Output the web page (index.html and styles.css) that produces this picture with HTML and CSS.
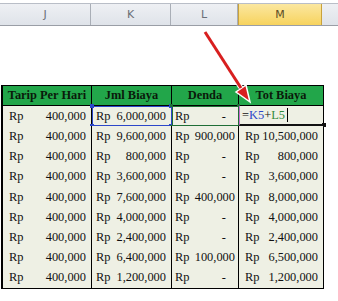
FILE: index.html
```html
<!DOCTYPE html>
<html>
<head>
<meta charset="utf-8">
<link rel="stylesheet" href="styles.css">
</head>
<body>
<div class="sheet">
  <div class="colhead">
    <div class="ch c-j">J</div>
    <div class="ch c-k">K</div>
    <div class="ch c-l">L</div>
    <div class="ch c-m active">M</div>
    <div class="ch c-n"></div>
  </div>
  <div class="blank"></div>
  <div class="table">
    <div class="th">Tarip Per Hari</div>
    <div class="th">Jml Biaya</div>
    <div class="th">Denda</div>
    <div class="th">Tot Biaya</div>

    <div class="td"><span>Rp</span><span>400,000</span></div>
    <div class="td sel-blue"><span>Rp</span><span>6,000,000</span><i class="h tl"></i><i class="h tr"></i><i class="h bl"></i><i class="h br"></i></div>
    <div class="td sel-green"><span>Rp</span><span class="dash">-</span><i class="h tl"></i><i class="h tr"></i><i class="h bl"></i><i class="h br"></i></div>
    <div class="td editing"><span class="f">=<b class="rk">K5</b>+<b class="rl">L5</b><i class="caret"></i></span><i class="h2"></i></div>

    <div class="td"><span>Rp</span><span>400,000</span></div>
    <div class="td"><span>Rp</span><span>9,600,000</span></div>
    <div class="td"><span>Rp</span><span>900,000</span></div>
    <div class="td"><span>Rp</span><span>10,500,000</span></div>

    <div class="td"><span>Rp</span><span>400,000</span></div>
    <div class="td"><span>Rp</span><span>800,000</span></div>
    <div class="td"><span>Rp</span><span class="dash">-</span></div>
    <div class="td"><span>Rp</span><span>800,000</span></div>

    <div class="td"><span>Rp</span><span>400,000</span></div>
    <div class="td"><span>Rp</span><span>3,600,000</span></div>
    <div class="td"><span>Rp</span><span class="dash">-</span></div>
    <div class="td"><span>Rp</span><span>3,600,000</span></div>

    <div class="td"><span>Rp</span><span>400,000</span></div>
    <div class="td"><span>Rp</span><span>7,600,000</span></div>
    <div class="td"><span>Rp</span><span>400,000</span></div>
    <div class="td"><span>Rp</span><span>8,000,000</span></div>

    <div class="td"><span>Rp</span><span>400,000</span></div>
    <div class="td"><span>Rp</span><span>4,000,000</span></div>
    <div class="td"><span>Rp</span><span class="dash">-</span></div>
    <div class="td"><span>Rp</span><span>4,000,000</span></div>

    <div class="td"><span>Rp</span><span>400,000</span></div>
    <div class="td"><span>Rp</span><span>2,400,000</span></div>
    <div class="td"><span>Rp</span><span class="dash">-</span></div>
    <div class="td"><span>Rp</span><span>2,400,000</span></div>

    <div class="td"><span>Rp</span><span>400,000</span></div>
    <div class="td"><span>Rp</span><span>6,400,000</span></div>
    <div class="td"><span>Rp</span><span>100,000</span></div>
    <div class="td"><span>Rp</span><span>6,500,000</span></div>

    <div class="td"><span>Rp</span><span>400,000</span></div>
    <div class="td"><span>Rp</span><span>1,200,000</span></div>
    <div class="td"><span>Rp</span><span class="dash">-</span></div>
    <div class="td"><span>Rp</span><span>1,200,000</span></div>
  </div>
  <svg class="arrow" width="338" height="301" viewBox="0 0 338 301">
    <line x1="205" y1="32" x2="241" y2="88" stroke="#ffffff" stroke-width="5"/>
    <polygon points="250,102 236,92 246,85" fill="#d81f1f" stroke="#ffffff" stroke-width="1.5"/>
    <line x1="205" y1="32" x2="241" y2="88" stroke="#d81f1f" stroke-width="3"/>
  </svg>
</div>
</body>
</html>
```
FILE: styles.css
```css
html, body {
  margin: 0;
  padding: 0;
  background: #ffffff;
}
.sheet {
  position: relative;
  width: 338px;
  height: 301px;
  overflow: hidden;
}
.colhead {
  display: flex;
  margin-top: 3px;
  height: 21px;
  border-top: 1px solid #b9bec7;
  border-bottom: 1px solid #9a9ea6;
  background: linear-gradient(#eef0f4, #dfe3e9);
}
.ch {
  box-sizing: border-box;
  border-right: 1px solid #a9aeb6;
  display: flex;
  align-items: center;
  justify-content: center;
  font-family: "DejaVu Sans", sans-serif;
  font-size: 11px;
  color: #6a6f77;
}
.c-j { width: 91px; }
.c-k { width: 80px; }
.c-l { width: 67px; }
.c-m { width: 84px; }
.c-n { width: 16px; border-right: none; }
.ch.active {
  background: linear-gradient(#fbe7a0, #f7d35e);
  border-left: 1px solid #c9a23c;
  border-right: 1px solid #c9a23c;
  color: #5c4c24;
}
.blank {
  height: 59px;
}
.table {
  display: grid;
  grid-template-columns: 89px 80px 67px 84px;
  grid-auto-rows: 20.2px;
  width: 320px;
  margin-left: 1px;
  border: 1px solid #000;
  border-left-width: 2px;
  font-family: "Liberation Serif", "Times New Roman", serif;
  font-size: 12.4px;
  color: #111;
}
.th {
  background: #22a64a;
  font-weight: bold;
  display: flex;
  align-items: center;
  justify-content: center;
  border-right: 1px solid #000;
  border-bottom: 1px solid #000;
  box-sizing: border-box;
  color: #0a1a0a;
}
.td {
  position: relative;
  background: #eef0e4;
  display: flex;
  align-items: center;
  justify-content: space-between;
  padding: 0 5px 0 6px;
  border-right: 1px solid #000;
  box-sizing: border-box;
}
.td:nth-child(4n+3) {
  padding: 0 3px 0 3px;
}
.td:nth-child(4n+2) {
  padding: 0 5px 0 4px;
}
.th:nth-child(4n), .td:nth-child(4n) {
  border-right: none;
}
.td .dash {
  padding-right: 9px;
}
.sel-blue {
  outline: 1px solid #2c47c9;
  outline-offset: -1px;
}
.sel-green {
  outline: 1px solid #1f6e36;
  outline-offset: -1px;
}
.h {
  position: absolute;
  width: 4px;
  height: 4px;
  background: #2c47c9;
}
.sel-green .h { background: #1f6e36; width: 3px; height: 3px; }
.h.tl { left: -2px; top: -2px; }
.h.tr { right: -2px; top: -2px; }
.h.bl { left: -2px; bottom: -2px; }
.h.br { right: -2px; bottom: -2px; }
.editing {
  justify-content: flex-start;
  border-left: 1px solid #c86ad0;
  border-bottom: 2px solid #111;
  padding-left: 2px;
}
.f {
  display: flex;
  align-items: center;
}
.f b { font-weight: normal; }
.rk { color: #2c47c9; }
.rl { color: #2e8a3c; }
.caret {
  display: inline-block;
  width: 1px;
  height: 14px;
  background: #000;
  margin-left: 2px;
}
.h2 {
  position: absolute;
  right: -3px;
  bottom: -3px;
  width: 4px;
  height: 4px;
  background: #111;
}
.arrow {
  position: absolute;
  left: 0;
  top: 0;
  pointer-events: none;
}
```
